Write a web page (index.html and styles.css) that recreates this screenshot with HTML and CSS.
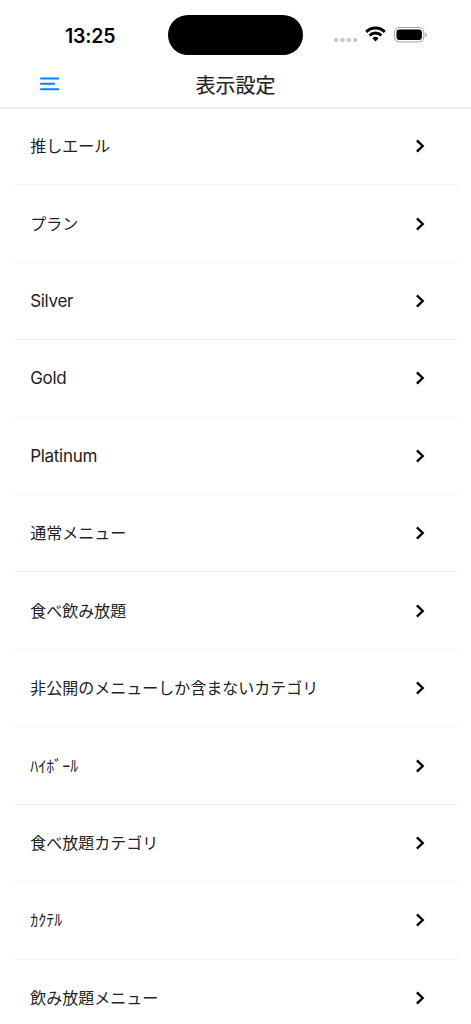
FILE: index.html
```html
<!DOCTYPE html>
<html lang="ja">
<head>
<meta charset="utf-8">
<title>表示設定</title>
<link rel="stylesheet" href="styles.css">
</head>
<body>
<div class="status">
  <div class="time">13:25</div>
  <div class="island"></div>
  <div class="indicators">
    <svg class="dots" width="25" height="6" viewBox="0 0 25 6" fill="#c9c9cb"><circle cx="3" cy="3" r="2.2"/><circle cx="9.4" cy="3" r="2.2"/><circle cx="15.8" cy="3" r="2.2"/><circle cx="22.2" cy="3" r="2.2"/></svg>
    <svg class="wifi" width="21" height="16" viewBox="0 0 21 16" fill="none" stroke="#000" stroke-width="2.9"><path d="M1.2 5.9a13.2 13.2 0 0 1 18.6 0"/><path d="M4.6 9.5a8.3 8.3 0 0 1 11.8 0"/><path d="M10.5 15.4 7.4 12.3a4.5 4.5 0 0 1 6.2 0Z" fill="#000" stroke="none"/></svg>
    <svg class="battery" width="34" height="16" viewBox="0 0 34 16"><rect x=".6" y=".5" width="29.2" height="14.4" rx="4.5" fill="none" stroke="#a0a0a0"/><rect x="2.5" y="2.4" width="25.4" height="10.6" rx="3"/><path d="M31.2 5.4v4.8q1.6-.7 1.6-2.4t-1.6-2.4Z" fill="#a0a0a0"/></svg>
  </div>
</div>
<header class="header">
  <svg class="menu" width="20" height="14" viewBox="0 0 20 14" stroke="#087fff" stroke-width="2" stroke-linecap="round"><path d="M1 1.5h17.2M1 6.8h13.2M1 12.2h17.2"/></svg>
  <h1 class="title">表示設定</h1>
</header>
<ul class="list" id="list"></ul>
<script src="app.js"></script>
</body>
</html>
```
FILE: styles.css
```css
* { box-sizing: border-box; }
body { margin: 0; height: 1024px; overflow: hidden; background: #fff; color: #222; font-family: Inter, "Noto Sans CJK JP", sans-serif; }
.status { height: 62px; padding-top: 15px; display: grid; grid-template-columns: 168px 135px 1fr; }
.time { padding: 9px 0 0 65px; font-size: 19.5px; line-height: 24px; font-weight: 600; letter-spacing: -.2px; color: #000; }
.island { height: 39.5px; border-radius: 20px; background: #000; }
.indicators { display: flex; align-items: flex-start; padding: 11px 0 0 30px; }
.dots { margin-top: 11px; }
.wifi { margin-left: 7px; }
.battery { margin: 1px 0 0 8px; }
.header { height: 47px; display: grid; grid-template-columns: 60px 1fr 60px; align-items: center; border-bottom: 2px solid #ededed; }
.menu { margin: 0 0 2px 40px; }
.title { margin: 0; padding-top: 2px; text-align: center; font-size: 20px; line-height: 30px; font-weight: 400; -webkit-text-stroke: .2px #222; }
.list { margin: 0 13px 0 12.6px; padding: 0; list-style: none; }
.row { height: 77.45px; padding: 0 33.5px 0 17.6px; display: flex; align-items: center; justify-content: space-between; border-bottom: 1px solid #f2f2f2; font-size: 16px; }
.row:first-child { height: 76.3px; padding-bottom: 1px; }
.label { font-family: "Noto Sans CJK JP", sans-serif; line-height: 22px; padding-bottom: 2px; }
.label-latin { font-family: Inter, sans-serif; font-size: 17px; letter-spacing: -.3px; padding: 0; }
.chevron { flex: none; }
```
FILE: app.js
```javascript
const labels = ["推しエール", "プラン", "Silver", "Gold", "Platinum", "通常メニュー", "食べ飲み放題", "非公開のメニューしか含まないカテゴリ", "\uFF8A\uFF72\uFF8E\uFF9E\uFF70\uFF99", "食べ放題カテゴリ", "\uFF76\uFF78\uFF83\uFF99", "飲み放題メニュー"];
const chevron = `<svg class="chevron" width="10" height="14" viewBox="0 0 10 14" fill="none" stroke="#000" stroke-width="2.4"><path d="m1.9 1.4 5.8 5.6-5.8 5.6"/></svg>`;
const labelClass = t => /^[A-Za-z]+$/.test(t) ? "label label-latin" : "label";
document.getElementById("list").innerHTML = labels.map(t => `<li class="row"><span class="${labelClass(t)}">${t}</span>${chevron}</li>`).join("");
```
